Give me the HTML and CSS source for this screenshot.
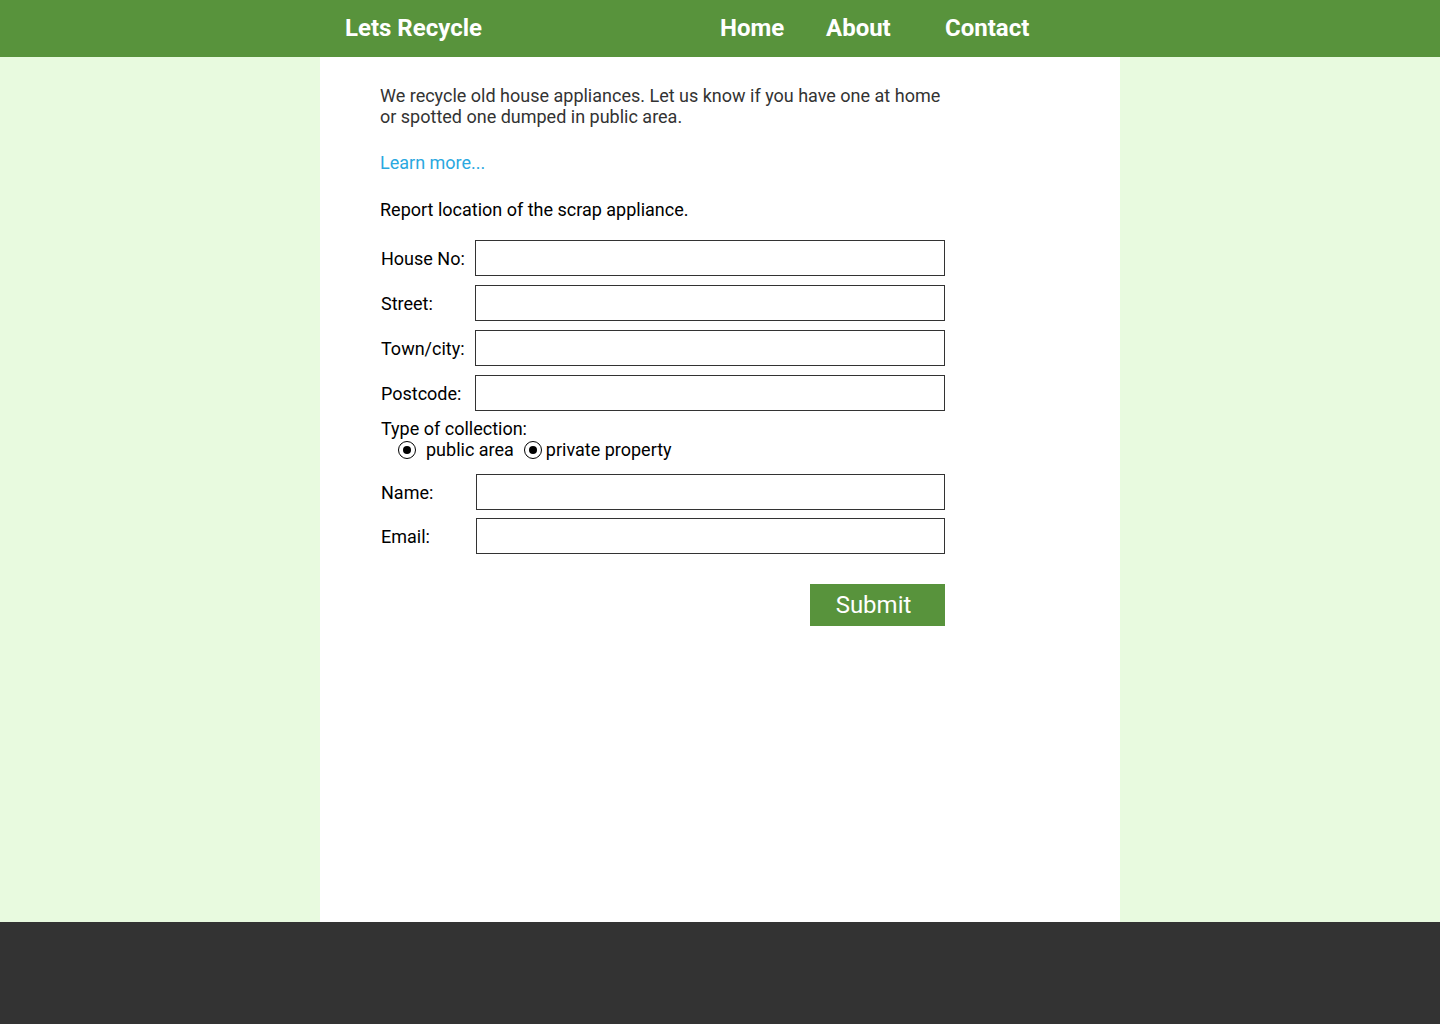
FILE: index.html
```html
<!DOCTYPE html>
<html lang="en">
<head>
<meta charset="utf-8">
<title>Lets Recycle</title>
<link rel="stylesheet" href="styles.css">
</head>
<body>
<header class="topbar">
  <div class="topbar-inner">
    <div class="logo">Lets Recycle</div>
    <nav class="nav">
      <a href="#" class="nav-link">Home</a>
      <a href="#" class="nav-link">About</a>
      <a href="#" class="nav-link">Contact</a>
    </nav>
  </div>
</header>
<main class="page">
  <section class="content">
    <p class="intro">We recycle old house appliances. Let us know if you have one at home or spotted one dumped in public area.</p>
    <a href="#" class="learn">Learn more...</a>
    <p class="report">Report location of the scrap appliance.</p>
    <form class="form">
      <div class="row"><label class="label">House No:</label><input class="field" type="text"></div>
      <div class="row"><label class="label">Street:</label><input class="field" type="text"></div>
      <div class="row"><label class="label">Town/city:</label><input class="field" type="text"></div>
      <div class="row"><label class="label">Postcode:</label><input class="field" type="text"></div>
      <div class="collection">
        <div class="label">Type of collection:</div>
        <div class="radios">
          <label class="radio"><span class="dot"></span><span class="radio-text">public area</span></label>
          <label class="radio"><span class="dot"></span><span class="radio-text tight">private property</span></label>
        </div>
      </div>
      <div class="row row-contact"><label class="label">Name:</label><input class="field" type="text"></div>
      <div class="row row-contact"><label class="label">Email:</label><input class="field" type="text"></div>
      <div class="actions"><button type="button" class="submit">Submit</button></div>
    </form>
  </section>
</main>
<footer class="footer"></footer>
</body>
</html>
```
FILE: styles.css
```css
* { box-sizing: border-box; }
html, body { margin: 0; padding: 0; }
body {
  font-family: Roboto, "Liberation Sans", Arial, sans-serif;
  background: #e8fadf;
  color: #000;
  min-height: 1024px;
  display: flex;
  flex-direction: column;
}
.topbar {
  background: #58933c;
  height: 57px;
}
.topbar-inner {
  width: 800px;
  margin: 0 auto;
  display: grid;
  grid-template-columns: 400px 400px;
  height: 57px;
  align-items: center;
  padding-bottom: 2px;
}
.logo {
  color: #fff;
  font-weight: 700;
  font-size: 24px;
  padding-left: 25px;
}
.nav {
  display: grid;
  grid-template-columns: 106px 119px auto;
}
.nav-link {
  color: #fff;
  font-weight: 700;
  font-size: 24px;
  text-decoration: none;
}
.page {
  flex: 1;
  display: flex;
  justify-content: center;
}
.content {
  width: 800px;
  background: #fff;
  padding: 28px 60px 0 60px;
  height: 865px;
}
.intro {
  margin: 0;
  width: 570px;
  font-size: 18px;
  line-height: 21px;
  color: #333;
}
.learn {
  display: block;
  margin-top: 25px;
  font-size: 18px;
  line-height: 21px;
  color: #2aa8e0;
  text-decoration: none;
}
.report {
  margin: 26px 0 0 0;
  font-size: 18px;
  line-height: 21px;
}
.form {
  width: 565px;
  margin-top: 20px;
}
.row {
  display: flex;
  align-items: center;
  margin-bottom: 9px;
}
.label {
  width: 95px;
  padding-left: 1px;
  font-size: 18px;
  line-height: 21px;
}
.field {
  width: 470px;
  height: 36px;
  border: 1px solid #333;
  border-radius: 0;
  margin: 0;
  padding: 0 6px;
  font: inherit;
}
.row-contact .label { width: 96px; }
.row-contact .field { width: 469px; }
.row-contact + .row-contact { margin-top: -1px; }
.collection {
  margin-top: -2px;
  margin-bottom: 14px;
}
.collection .label { width: auto; }
.radios {
  display: flex;
  align-items: center;
  padding-left: 18px;
  font-size: 18px;
  line-height: 21px;
}
.radio {
  display: flex;
  align-items: center;
}
.dot {
  width: 18px;
  height: 18px;
  border: 1.5px solid #000;
  border-radius: 50%;
  display: flex;
  align-items: center;
  justify-content: center;
}
.dot::after {
  content: "";
  width: 8px;
  height: 8px;
  border-radius: 50%;
  background: #000;
}
.radio-text { margin: 0 10px 0 10px; }
.radio-text.tight { margin-left: 4px; }
.actions {
  display: flex;
  justify-content: flex-end;
  margin-top: 30px;
}
.submit {
  width: 135px;
  height: 42px;
  background: #58933c;
  color: #fff;
  border: none;
  border-radius: 0;
  font-family: Roboto, "Liberation Sans", Arial, sans-serif;
  font-size: 24px;
  padding: 0 8px 0 0;
}
.footer {
  height: 102px;
  background: #333;
}
```
